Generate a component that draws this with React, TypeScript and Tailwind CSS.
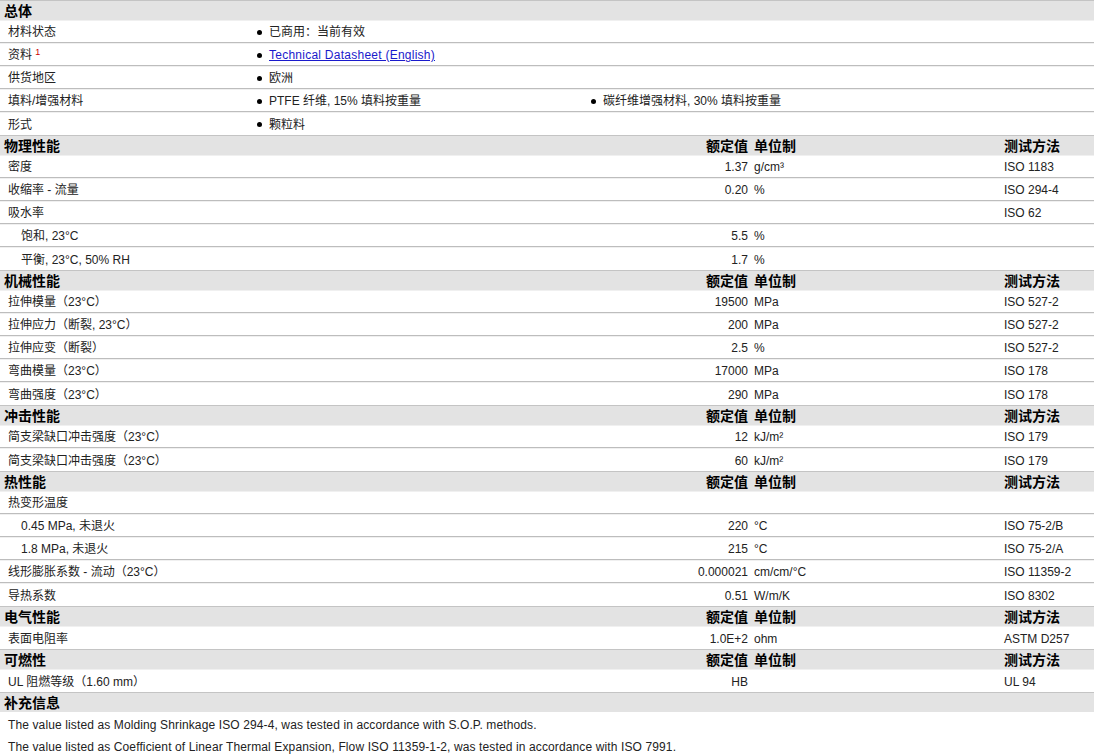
import React from 'react'

type Row = {
  label: React.ReactNode
  value?: string
  unit?: string
  method?: string
  indent?: boolean
}

type Section = {
  title: string
  cols?: boolean
  rows: Row[]
}

const FONT = "font-['Liberation_Sans','Noto_Sans_CJK_SC',sans-serif]"

const SECTIONS: Section[] = [
  {
    title: '物理性能',
    cols: true,
    rows: [
      { label: '密度', value: '1.37', unit: 'g/cm³', method: 'ISO 1183' },
      { label: '收缩率 - 流量', value: '0.20', unit: '%', method: 'ISO 294-4' },
      { label: '吸水率', method: 'ISO 62' },
      { label: '饱和, 23°C', value: '5.5', unit: '%', indent: true },
      { label: '平衡, 23°C, 50% RH', value: '1.7', unit: '%', indent: true },
    ],
  },
  {
    title: '机械性能',
    cols: true,
    rows: [
      { label: '拉伸模量（23°C）', value: '19500', unit: 'MPa', method: 'ISO 527-2' },
      { label: '拉伸应力（断裂, 23°C）', value: '200', unit: 'MPa', method: 'ISO 527-2' },
      { label: '拉伸应变（断裂）', value: '2.5', unit: '%', method: 'ISO 527-2' },
      { label: '弯曲模量（23°C）', value: '17000', unit: 'MPa', method: 'ISO 178' },
      { label: '弯曲强度（23°C）', value: '290', unit: 'MPa', method: 'ISO 178' },
    ],
  },
  {
    title: '冲击性能',
    cols: true,
    rows: [
      { label: '简支梁缺口冲击强度（23°C）', value: '12', unit: 'kJ/m²', method: 'ISO 179' },
      { label: '简支梁缺口冲击强度（23°C）', value: '60', unit: 'kJ/m²', method: 'ISO 179' },
    ],
  },
  {
    title: '热性能',
    cols: true,
    rows: [
      { label: '热变形温度' },
      { label: '0.45 MPa, 未退火', value: '220', unit: '°C', method: 'ISO 75-2/B', indent: true },
      { label: '1.8 MPa, 未退火', value: '215', unit: '°C', method: 'ISO 75-2/A', indent: true },
      { label: '线形膨胀系数 - 流动（23°C）', value: '0.000021', unit: 'cm/cm/°C', method: 'ISO 11359-2' },
      { label: '导热系数', value: '0.51', unit: 'W/m/K', method: 'ISO 8302' },
    ],
  },
  {
    title: '电气性能',
    cols: true,
    rows: [{ label: '表面电阻率', value: '1.0E+2', unit: 'ohm', method: 'ASTM D257' }],
  },
  {
    title: '可燃性',
    cols: true,
    rows: [{ label: 'UL 阻燃等级（1.60 mm）', value: 'HB', method: 'UL 94' }],
  },
]

function Header({ title, cols }: { title: string; cols?: boolean }) {
  return (
    <div className="flex h-[20px] items-center border-t border-[#c4c4c4] bg-[#e3e3e3] pt-[1px] text-[14px] font-bold leading-none text-black">
      <div className="flex-1 pl-[4px]">{title}</div>
      {cols && (
        <>
          <div className="w-[150px] pr-[6px] text-right">额定值</div>
          <div className="w-[250px]">单位制</div>
          <div className="w-[90px]">测试方法</div>
        </>
      )}
    </div>
  )
}

function Dot() {
  return <span className="mr-[7px] inline-block h-[5px] w-[5px] rounded-full bg-black" />
}

function GeneralRow({ label, items, last }: { label: React.ReactNode; items: React.ReactNode[]; last?: boolean }) {
  return (
    <div className={`flex h-[23px] items-center pt-[2px] text-[12px] text-[#222] ${last ? '' : 'border-b border-[#bdbdbd]'} shadow-[inset_0_1px_0_#f0f0f0]`}>
      <div className="w-[250px] pl-[8px]">{label}</div>
      {items.map((it, i) => (
        <div key={i} className={`flex items-center ${i === 0 ? 'w-[334px] pl-[7px]' : 'flex-1 pl-[7px]'}`}>
          <Dot />
          {it}
        </div>
      ))}
    </div>
  )
}

function DataRow({ row, last }: { row: Row; last: boolean }) {
  return (
    <div className={`flex h-[23px] items-center pt-[2px] text-[12px] text-[#222] ${last ? '' : 'border-b border-[#bdbdbd]'} shadow-[inset_0_1px_0_#f0f0f0]`}>
      <div className={`flex-1 ${row.indent ? 'pl-[21px]' : 'pl-[8px]'}`}>{row.label}</div>
      <div className="w-[150px] pr-[6px] text-right">{row.value}</div>
      <div className="w-[250px]">{row.unit}</div>
      <div className="w-[90px]">{row.method}</div>
    </div>
  )
}

export default function App() {
  return (
    <div className={`w-[1094px] bg-white ${FONT}`}>
      <Header title="总体" />
      <GeneralRow label="材料状态" items={['已商用：当前有效']} />
      <GeneralRow
        label={
          <span>
            资料 <sup className="text-[9px] text-[#cc0000]">1</sup>
          </span>
        }
        items={[
          <a href="#" className="tracking-[0.25px] text-[#1a1acc] underline">
            Technical Datasheet (English)
          </a>,
        ]}
      />
      <GeneralRow label="供货地区" items={['欧洲']} />
      <GeneralRow label="填料/增强材料" items={['PTFE 纤维, 15% 填料按重量', '碳纤维增强材料, 30% 填料按重量']} />
      <GeneralRow label="形式" items={['颗粒料']} last />

      {SECTIONS.map(sec => (
        <div key={sec.title}>
          <Header title={sec.title} cols={sec.cols} />
          {sec.rows.map((r, i) => (
            <DataRow key={i} row={r} last={i === sec.rows.length - 1} />
          ))}
        </div>
      ))}

      <Header title="补充信息" />
      <div className="pt-[2px] text-[12px] tracking-[0.12px] text-[#222]">
        <div className="flex h-[22px] items-center pl-[8px]">
          The value listed as Molding Shrinkage ISO 294-4, was tested in accordance with S.O.P. methods.
        </div>
        <div className="flex h-[22px] items-center pl-[8px]">
          The value listed as Coefficient of Linear Thermal Expansion, Flow ISO 11359-1-2, was tested in accordance with ISO 7991.
        </div>
      </div>
    </div>
  )
}
